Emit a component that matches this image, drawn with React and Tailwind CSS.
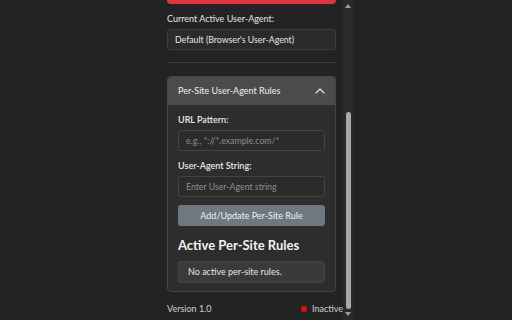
import { ChevronUp } from 'lucide-react';

const font = { fontFamily: 'Lato, "Open Sans", sans-serif' };

export default function App() {
  return (
    <div className="w-[512px] h-[320px] bg-[#232323] overflow-hidden flex text-[#e6e6e6]" style={font}>
      <div className="ml-[155px] w-[198px] h-full flex">
        {/* contenido */}
        <div className="w-[188px] pl-[12px] pr-[7px] flex flex-col">
          <button className="-mt-[22px] h-[26px] w-full shrink-0 rounded-[4px] bg-[#e2343f]" />

          <div className="mt-[9px] text-[9px] leading-[12px]">Current Active User-Agent:</div>
          <div className="mt-[4px] h-[21px] shrink-0 rounded-[3px] bg-[#2b2b2b] border border-[#3c3c3c] flex items-center px-[7px] text-[8.75px]">
            Default (Browser's User-Agent)
          </div>

          <div className="mt-[12px] h-px shrink-0 bg-[#3e3e3e]" />

          {/* Reglas por sitio */}
          <div className="mt-[13px] shrink-0 rounded-[4px] border border-[#444] bg-[#2d2d2d] overflow-hidden">
            <div className="h-[28px] bg-[#4b4b4b] flex items-center justify-between pl-[10px] pr-[7px]">
              <span className="text-[9px] text-[#f0f0f0]">Per-Site User-Agent Rules</span>
              <ChevronUp size={16} strokeWidth={1.75} className="text-[#e6e6e6]" />
            </div>
            <div className="px-[10px] pt-[9px] pb-[8px] flex flex-col">
              <label className="text-[9px] leading-[12px] font-semibold text-[#e8e8e8]">URL Pattern:</label>
              <div className="mt-[4px] h-[21px] rounded-[3px] bg-[#2b2b2b] border border-[#444] flex items-center px-[7px] text-[8.75px] text-[#8e8e8e]">
                e.g., *://*.example.com/*
              </div>
              <label className="mt-[9px] text-[9px] leading-[12px] font-semibold text-[#e8e8e8]">User-Agent String:</label>
              <div className="mt-[4px] h-[21px] rounded-[3px] bg-[#2b2b2b] border border-[#444] flex items-center px-[7px] text-[8.75px] text-[#8e8e8e]">
                Enter User-Agent string
              </div>
              <button className="mt-[8px] h-[21px] rounded-[3px] bg-[#6f7780] text-[9px] text-[#eef0f2]">
                Add/Update Per-Site Rule
              </button>
              <h3 className="mt-[11px] text-[13px] leading-[16px] font-bold text-[#f2f2f2]">Active Per-Site Rules</h3>
              <div className="mt-[8px] h-[22px] rounded-[3px] bg-[#3a3a3a] border border-[#444] flex items-center px-[9px] text-[9px]">
                No active per-site rules.
              </div>
            </div>
          </div>

          <div className="mt-[11px] -mr-[7px] flex items-center justify-between text-[9px] leading-[12px] text-[#d0d0d0]">
            <span>Version 1.0</span>
            <span className="flex items-center gap-[5px]">
              <span className="w-[6px] h-[6px] rounded-full bg-[#e01010]" />
              Inactive
            </span>
          </div>
        </div>

        {/* barra de scroll */}
        <div className="w-[10px] h-full bg-[#2a2a2a] flex flex-col items-center">
          <svg width="10" height="10" viewBox="0 0 10 10" className="mt-[1px]">
            <path d="M2 7 L5 3 L8 7 Z" fill="#a0a0a0" />
          </svg>
          <div className="mt-[101px] w-[5px] h-[198px] rounded-full bg-[#a9a9a9]" />
          <svg width="10" height="10" viewBox="0 0 10 10" className="mt-auto mb-[1px]">
            <path d="M2 3 L5 7 L8 3 Z" fill="#a0a0a0" />
          </svg>
        </div>
      </div>
    </div>
  );
}
